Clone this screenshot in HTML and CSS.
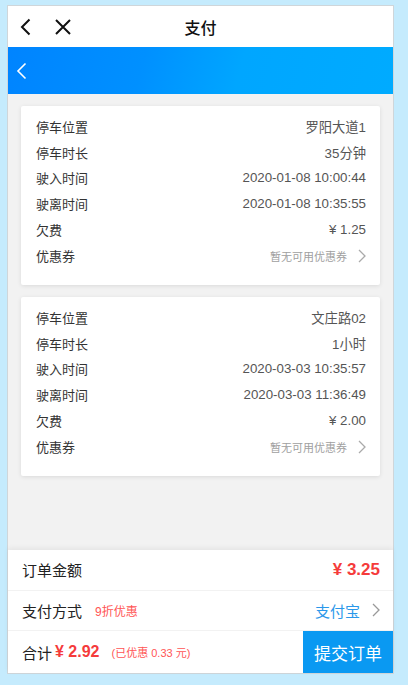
FILE: index.html
```html
<!DOCTYPE html>
<html lang="zh">
<head>
<meta charset="utf-8">
<title>支付</title>
<link rel="stylesheet" href="styles.css">
</head>
<body>
<div class="frame">
  <div class="topbar">
    <span class="tb-icon back">
      <svg width="14" height="18" viewBox="0 0 14 18"><path d="M10.5 1.5 L3 9 L10.5 16.5" fill="none" stroke="#111" stroke-width="2"/></svg>
    </span>
    <span class="tb-icon close">
      <svg width="18" height="18" viewBox="0 0 18 18"><path d="M2 2 L16 16 M16 2 L2 16" fill="none" stroke="#111" stroke-width="2"/></svg>
    </span>
    <span class="title">支付</span>
  </div>
  <div class="bluebar">
    <svg width="12" height="18" viewBox="0 0 12 18"><path d="M9.5 1.5 L2 9 L9.5 16.5" fill="none" stroke="#fff" stroke-width="1.6"/></svg>
  </div>
  <div class="content">
    <div class="card">
      <div class="row"><span class="lbl">停车位置</span><span class="val">罗阳大道1</span></div>
      <div class="row"><span class="lbl">停车时长</span><span class="val">35分钟</span></div>
      <div class="row"><span class="lbl">驶入时间</span><span class="val">2020-01-08 10:00:44</span></div>
      <div class="row"><span class="lbl">驶离时间</span><span class="val">2020-01-08 10:35:55</span></div>
      <div class="row"><span class="lbl">欠费</span><span class="val">¥ 1.25</span></div>
      <div class="row coupon"><span class="lbl">优惠券</span><span class="cval">暂无可用优惠券<svg class="chev" width="8" height="14" viewBox="0 0 8 14"><path d="M1 1 L7 7 L1 13" fill="none" stroke="#aaa" stroke-width="1.3"/></svg></span></div>
    </div>
    <div class="card">
      <div class="row"><span class="lbl">停车位置</span><span class="val">文庄路02</span></div>
      <div class="row"><span class="lbl">停车时长</span><span class="val">1小时</span></div>
      <div class="row"><span class="lbl">驶入时间</span><span class="val">2020-03-03 10:35:57</span></div>
      <div class="row"><span class="lbl">驶离时间</span><span class="val">2020-03-03 11:36:49</span></div>
      <div class="row"><span class="lbl">欠费</span><span class="val">¥ 2.00</span></div>
      <div class="row coupon"><span class="lbl">优惠券</span><span class="cval">暂无可用优惠券<svg class="chev" width="8" height="14" viewBox="0 0 8 14"><path d="M1 1 L7 7 L1 13" fill="none" stroke="#aaa" stroke-width="1.3"/></svg></span></div>
    </div>
  </div>
  <div class="footer">
    <div class="frow">
      <span class="flbl">订单金额</span>
      <span class="amount">¥ 3.25</span>
    </div>
    <div class="frow">
      <span class="flbl">支付方式<span class="disc">9折优惠</span></span>
      <span class="pay">支付宝<svg class="chev2" width="8" height="14" viewBox="0 0 8 14"><path d="M1 1 L7 7 L1 13" fill="none" stroke="#999" stroke-width="1.3"/></svg></span>
    </div>
    <div class="frow last">
      <span class="flbl total">合计<span class="tsum">¥ 2.92</span><span class="saved">(已优惠 0.33 元)</span></span>
      <span class="submit">提交订单</span>
    </div>
  </div>
</div>
</body>
</html>
```

FILE: styles.css
```css
* { box-sizing: border-box; }
html, body { margin: 0; padding: 0; }
body {
  background: #c5ebfd;
  font-family: "Liberation Sans", "Noto Sans CJK SC", sans-serif;
  width: 408px;
  height: 685px;
  overflow: hidden;
}
.frame {
  margin: 5px 0 0 7px;
  width: 387px;
  height: 669px;
  border: 1px solid #cfd6da;
  background: #f2f2f2;
  display: flex;
  flex-direction: column;
}
.topbar {
  height: 41px;
  background: #fff;
  position: relative;
  display: flex;
  align-items: center;
  flex-shrink: 0;
}
.tb-icon { display: flex; }
.back { margin-left: 11px; }
.close { margin-left: 21px; }
.title {
  position: absolute;
  left: 0; right: 0;
  top: 0; bottom: 0;
  display: flex;
  align-items: center;
  justify-content: center;
  font-size: 16px;
  font-weight: 500;
  color: #111;
  pointer-events: none;
}
.bluebar {
  height: 47px;
  flex-shrink: 0;
  background: linear-gradient(105deg, #0084ff 0%, #0090ff 35%, #00a6ff 60%, #00abff 100%);
  display: flex;
  align-items: center;
  padding-left: 8px;
}
.content {
  flex: 1;
  padding: 12px 13px 0 13px;
  display: flex;
  flex-direction: column;
  gap: 12px;
}
.card {
  background: #fff;
  border-radius: 2px;
  box-shadow: 0 1px 4px rgba(0,0,0,0.10);
  padding: 8px 14px 15px 15px;
}
.row {
  height: 25.6px;
  display: flex;
  align-items: center;
  justify-content: space-between;
  font-size: 13px;
}
.row.coupon { height: 28px; }
.lbl { color: #333; }
.val { color: #555; font-size: 13.3px; }
.cval {
  color: #a0a0a0;
  font-size: 11px;
  display: flex;
  align-items: center;
}
.chev { margin-left: 11px; margin-right: 0; }
.footer {
  background: #fff;
  flex-shrink: 0;
  box-shadow: 0 -2px 5px rgba(0,0,0,0.06);
  position: relative;
}
.frow {
  height: 40.5px;
  display: flex;
  align-items: center;
  justify-content: space-between;
  padding-left: 14px;
  padding-right: 13px;
  border-bottom: 1px solid #f2f2f2;
}
.frow.last {
  height: 42px;
  border-bottom: none;
  padding-right: 0;
  align-items: stretch;
}
.flbl {
  font-size: 15px;
  color: #222;
  display: flex;
  align-items: center;
}
.amount {
  color: #f53b3b;
  font-size: 17px;
  font-weight: bold;
}
.disc {
  color: #f55;
  font-size: 12px;
  margin-left: 13px;
}
.pay {
  color: #2a98ea;
  font-size: 15px;
  display: flex;
  align-items: center;
}
.chev2 { margin-left: 12px; }
.tsum {
  color: #f53b3b;
  font-size: 16px;
  font-weight: bold;
  margin-left: 3px;
}
.saved {
  color: #f55;
  font-size: 11px;
  margin-left: 12px;
}
.submit {
  width: 90px;
  background: #0a99f2;
  color: #fff;
  font-size: 17px;
  display: flex;
  align-items: center;
  justify-content: center;
}
```
